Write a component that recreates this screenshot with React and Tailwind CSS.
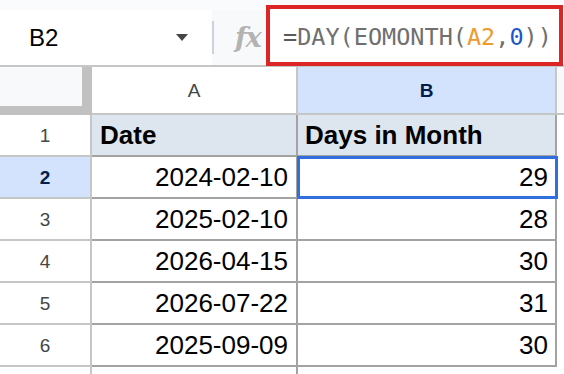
import React from "react";

const rows = [
  { n: 1, a: "Date", b: "Days in Month", head: true },
  { n: 2, a: "2024-02-10", b: "29", sel: true },
  { n: 3, a: "2025-02-10", b: "28" },
  { n: 4, a: "2026-04-15", b: "30" },
  { n: 5, a: "2026-07-22", b: "31" },
  { n: 6, a: "2025-09-09", b: "30" },
];

export default function App() {
  return (
    <div className="relative w-[564px] h-[374px] overflow-hidden bg-white font-['Liberation_Sans',Arial,sans-serif]">
      <div className="h-[10px] bg-[#f9fbfd]" />
      <div className="flex h-[55px]">
        <div className="w-[212px] bg-white flex items-center pl-[29px]">
          <span className="text-[24px] leading-none text-black">B2</span>
          <svg className="ml-auto mr-[24px]" width="12" height="7" viewBox="0 0 12 7">
            <path d="M0 0 L12 0 L6 7 Z" fill="#444746" />
          </svg>
        </div>
        <div className="w-[2px] bg-[#f8f9fa] flex items-center">
          <div className="w-[2px] h-[33px] bg-[#c8d3e2]" />
        </div>
        <div className="w-[52px] bg-[#f8f9fa] flex items-center pl-[21px]">
          <span className="font-['DejaVu_Serif',serif] italic font-bold text-[27px] leading-none text-[#b3b3b3] tracking-[-1px]">
            fx
          </span>
        </div>
        <div className="flex-1 bg-white flex items-center pl-[17px]">
          <span className="font-['DejaVu_Sans_Mono',monospace] text-[23.5px] leading-none text-[#6f6f6f] whitespace-nowrap">
            <span className="text-[#5a5a5a]">=</span>DAY(EOMONTH(
            <span className="text-[#f09a2e]">A2</span>,
            <span className="text-[#1a57c8]">0</span>))
          </span>
        </div>
      </div>
      <div className="h-[2px] bg-[#c4c7c5]" />
      {/* column header row */}
      <div className="flex h-[48px]">
        <div className="w-[92px] flex flex-col bg-[#c0c1c0]">
          <div className="flex h-[39px]">
            <div className="w-[82px] bg-[#f8f9fa]" />
          </div>
        </div>
        <div className="w-[206px] bg-white border-r-2 border-b-2 border-[#c4c7c5] flex items-center justify-center">
          <span className="text-[19px] leading-none text-[#444746]">A</span>
        </div>
        <div className="w-[259px] bg-[#d3e3fd] border-r-2 border-b-2 border-[#c4c7c5] flex items-center justify-center">
          <span className="text-[19px] leading-none font-bold text-[#041e49]">B</span>
        </div>
        <div className="flex-1 bg-[#f8f9fa] border-b-2 border-[#c4c7c5]" />
      </div>
      {rows.map((r) => (
        <div key={r.n} className="flex h-[42px]">
          <div
            className={`w-[92px] border-r-2 border-b-2 border-[#c4c7c5] flex items-center justify-center ${
              r.sel ? "bg-[#d3e3fd]" : "bg-white"
            }`}
          >
            <span
              className={`text-[19px] leading-none ${
                r.sel ? "font-bold text-[#041e49]" : "text-[#444746]"
              }`}
            >
              {r.n}
            </span>
          </div>
          <div
            className={`w-[206px] border-r-2 border-b-2 border-[#a3a3a3] flex items-center ${
              r.head ? "bg-[#dde5ee] justify-start pl-[8px]" : "bg-white justify-end pr-[8px]"
            }`}
          >
            <span className={`text-[26px] leading-none text-black ${r.head ? "font-bold" : ""}`}>{r.a}</span>
          </div>
          <div
            className={`relative w-[259px] border-r-2 border-b-2 border-[#a3a3a3] flex items-center ${
              r.head ? "bg-[#dde5ee] justify-start pl-[7px]" : "bg-white justify-end pr-[7px]"
            }`}
          >
            <span className={`text-[26px] leading-none text-black ${r.head ? "font-bold" : ""}`}>{r.b}</span>
            {r.sel && (
              <div className="absolute -left-[1px] -top-[1px] -right-[3px] -bottom-[2px] border-[3px] border-[#2f6fe0]" />
            )}
          </div>
          <div className="flex-1 bg-white" />
        </div>
      ))}
      <div className="flex h-[20px]">
        <div className="w-[92px] border-r-2 border-[#c4c7c5] bg-white" />
        <div className="w-[206px] border-r-2 border-[#a3a3a3] bg-white" />
        <div className="flex-1 bg-white" />
      </div>
      {/* red annotation box around formula */}
      <div className="absolute left-[266px] top-[5px] w-[297px] h-[61px] border-4 border-[#dc2626]" />
    </div>
  );
}
